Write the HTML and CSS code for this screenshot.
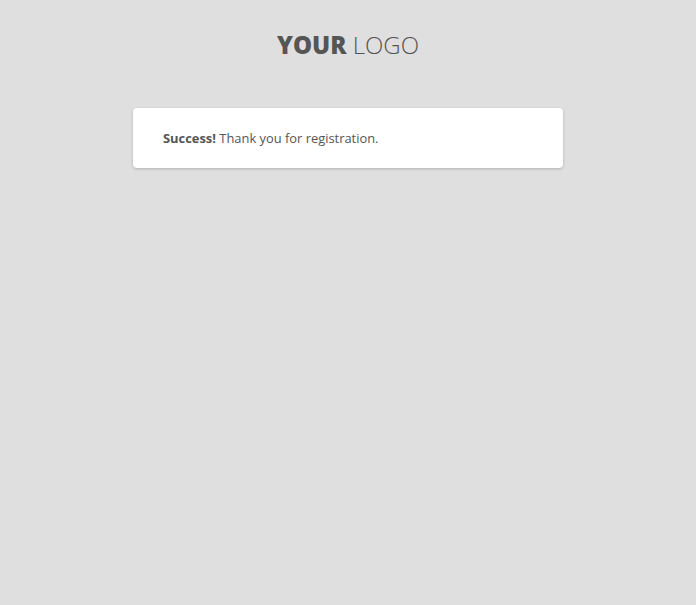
FILE: index.html
```html
<!DOCTYPE html>
<html lang="en">
<head>
    <meta charset="UTF-8">
    <meta name="viewport" content="width=device-width, initial-scale=1.0">
    <title>Registration</title>
    <link rel="stylesheet" href="styles.css">
</head>
<body>
    <div class="page">
        <div class="logo"><strong>YOUR</strong> LOGO</div>

        <div class="message-box">
            <p class="message"><strong>Success!</strong> Thank you for registration.</p>
        </div>
    </div>
</body>
</html>
```

FILE: styles.css
```css
body {
    font-family: 'Open Sans', 'Noto Sans', sans-serif;
    background: #dfdfdf;
    margin: 0;
    min-height: 100vh;
    color: #555;
}

.page {
    width: 430px;
    margin: 0 auto;
    padding-top: 29px;
}

.logo {
    text-align: center;
    font-size: 24px;
    font-weight: 300;
    line-height: 32px;
    color: #555;
    margin-bottom: 47px;
}

.logo strong {
    font-weight: 800;
}

.message-box {
    background: #ffffff;
    border-radius: 4px;
    box-shadow: 0 1px 3px rgba(0,0,0,0.2);
    padding: 0 30px;
    height: 60px;
    display: flex;
    align-items: center;
}

.message {
    margin: 0;
    font-size: 12.9px;
    color: #555;
}

.message strong {
    font-weight: 700;
}
```
